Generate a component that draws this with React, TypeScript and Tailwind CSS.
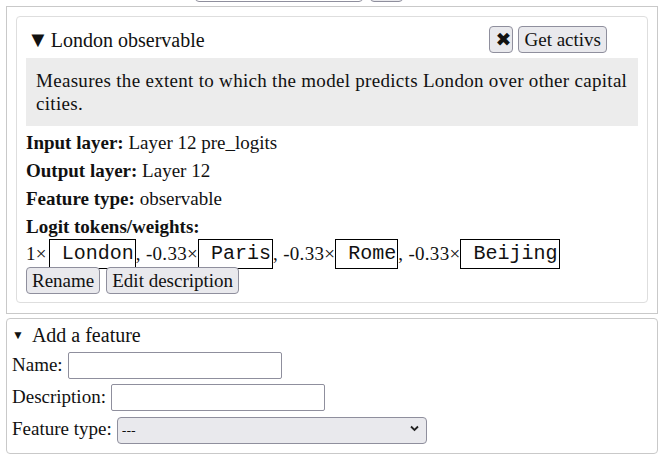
const serif = { fontFamily: '"Liberation Serif", "Times New Roman", serif' };

const btn =
  "h-[27px] rounded-[4px] border border-[#8f8f9d] bg-[#e9e9ed] px-[5px] text-[19px] leading-[25px] text-[#111]";

const Token = ({ text }: { text: string }) => (
  <span className="inline-flex h-[30px] items-center border border-black pr-[1px] font-['Liberation_Mono',monospace] text-[20px] leading-none tracking-normal whitespace-pre">
    {" " + text}
  </span>
);

const Field = ({ label, width }: { label: string; width: string }) => (
  <div className="flex h-[27px] items-center gap-[5px]">
    <span>{label}</span>
    <input className={`h-[27px] ${width} rounded-[2px] border border-[#8f8f9d] bg-white px-1`} />
  </div>
);

export default function App() {
  return (
    <div className="min-h-[476px] bg-white pl-[6px] text-[19px] text-[#111]" style={serif}>
      {/* bottom of the row above, scrolled out of view */}
      <div className="-mt-[25px] flex h-[27px] items-center">
        <div className="ml-[189px] h-[27px] w-[168px] rounded-[4px] border border-[#8f8f9d] bg-white" />
        <div className="ml-[7px] h-[27px] w-[33px] rounded-[4px] border border-[#8f8f9d] bg-[#e9e9ed]" />
      </div>

      <div className="mt-[4px] w-[652px] border border-[#c9c9c9] px-[9px] pt-[9px] pb-[10px]">
        <div className="rounded-[4px] border border-[#dedede] px-[9px] pt-[9px] pb-[8px]">
          <div className="flex h-[27px] items-center">
            <span className="ml-[1px] text-[22px] leading-none">▼</span>
            <span className="ml-[2px] text-[20px]">London observable</span>
            <div className="ml-auto mr-[31px] flex gap-[5px]">
              <button className={`${btn} w-[24px] px-0 font-['DejaVu_Sans',sans-serif] text-[16px]`}>✖</button>
              <button className={btn}>Get activs</button>
            </div>
          </div>
          <div className="mt-[5px] bg-[#ececec] px-[10px] py-[11px] leading-[23px] tracking-[0.3px]">
            Measures the extent to which the model predicts London over other capital cities.
          </div>
          <div className="mt-[3px] leading-[28px]">
            <div>
              <b>Input layer:</b> Layer 12 pre_logits
            </div>
            <div>
              <b>Output layer:</b> Layer 12
            </div>
            <div>
              <b>Feature type:</b> observable
            </div>
            <div>
              <b>Logit tokens/weights:</b>
            </div>
          </div>
          <div className="flex h-[26px] items-center tracking-[0.3px] whitespace-pre">
            <span className="mr-[2px]">1×</span>
            <Token text="London" />
            <span>, -0.33×</span>
            <Token text="Paris" />
            <span>, -0.33×</span>
            <Token text="Rome" />
            <span>, -0.33×</span>
            <Token text="Beijing" />
          </div>
          <div className="flex gap-[6px]">
            <button className={btn}>Rename</button>
            <button className={btn}>Edit description</button>
          </div>
        </div>
      </div>

      <div className="mt-[4px] w-[652px] rounded-[4px] border border-[#c9c9c9] px-[5px] pt-[2px] pb-[10px]">
        <div className="flex h-[28px] items-center text-[20px]">
          <span className="text-[12px]">▼</span>
          <span className="ml-[8px]">Add a feature</span>
        </div>
        <div className="mt-[3px] flex flex-col gap-[5px]">
          <Field label="Name:" width="w-[214px]" />
          <Field label="Description:" width="w-[214px]" />
          <div className="flex h-[27px] items-center gap-[5px]">
            <span>Feature type:</span>
            <div className="relative">
              <select className="h-[27px] w-[310px] appearance-none rounded-[4px] border border-[#8f8f9d] bg-[#e9e9ed] px-[4px] font-['DejaVu_Sans',sans-serif] text-[13px]">
                <option>---</option>
              </select>
              <svg
                className="pointer-events-none absolute top-[10px] right-[8px]"
                width="9"
                height="7"
                viewBox="0 0 9 7"
              >
                <path d="M1 1.5 L4.5 5 L8 1.5" stroke="#222" strokeWidth="1.8" fill="none" />
              </svg>
            </div>
          </div>
        </div>
      </div>
    </div>
  );
}
